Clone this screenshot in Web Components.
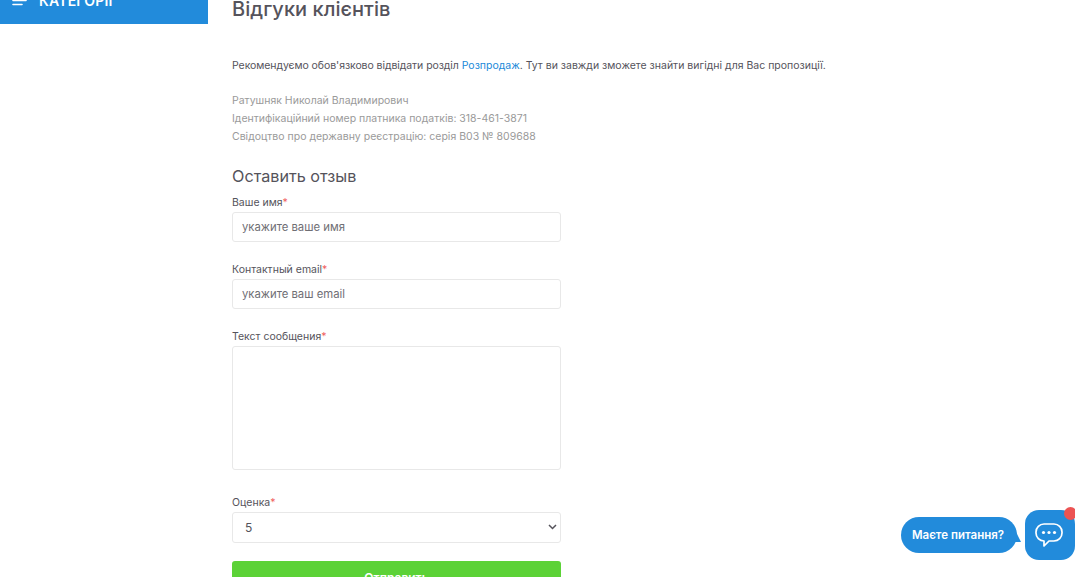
<!DOCTYPE html>
<html lang="uk">
<head>
<meta charset="utf-8">
<title>Відгуки клієнтів</title>
<style>
html, body { margin: 0; height: 577px; overflow: hidden; background: #fff; }
body { font-family: "Inter", "Liberation Sans", sans-serif; color: #55535b; }
</style>
</head>
<body>
<shop-page>
    <side-menu slot="side">КАТЕГОРІЇ</side-menu>
    <page-intro>Відгуки клієнтів</page-intro>
    <review-form></review-form>
</shop-page>
<chat-widget>Маєте питання?</chat-widget>

<script>
class ShopPage extends HTMLElement{
    constructor(){
        super();
        this.attachShadow({mode: "open"}).innerHTML = `
<style>
:host{
    display: grid;
    grid-template-columns: 208px 329px;
    column-gap: 24px;
    margin-top: -24px;
}
main{ display: flex; flex-direction: column; }
</style>
<aside><slot name="side"></slot></aside>
<main><slot></slot></main>`;
    }
}

class SideMenu extends HTMLElement{
    constructor(){
        super();
        this.attachShadow({mode: "open"}).innerHTML = `
<style>
:host{
    display: flex;
    align-items: center;
    gap: 12px;
    height: 48px;
    padding-left: 12px;
    box-sizing: border-box;
    background: #228bdb;
    color: #fff;
    font-size: 14px;
    font-weight: 600;
    letter-spacing: .2px;
}
svg{ display: block; }
</style>
<svg width="15" height="12" viewBox="0 0 15 12" fill="none" stroke="#fff" stroke-width="1.6" stroke-linecap="round">
    <path d="M1 2.5h13M1 6.500h13M1 10.500h9"/>
</svg>
<slot></slot>`;
    }
}

class PageIntro extends HTMLElement{
    constructor(){
        super();
        this.attachShadow({mode: "open"}).innerHTML = `
<style>
:host{ display: block; width: 700px; }
h1{
    margin: 0;
    padding-top: 20px;
    font-size: 20px;
    line-height: 26px;
    font-weight: 500;
    letter-spacing: .05px;
    color: #55535b;
}
p{ margin: 0; font-size: 10.5px; line-height: 18px; }
.promo{ margin-top: 35px; white-space: nowrap; }
.promo span{ letter-spacing: -.07px; }
.promo a{ color: #2089d9; text-decoration: none; }
.owner{ margin-top: 17px; color: #9a9a9a; }
</style>
<h1><slot></slot></h1>
<p class="promo"><span>Рекомендуємо обов'язково відвідати розділ </span><a href="#">Розпродаж</a>. Тут ви завжди зможете знайти вигідні для Вас пропозиції.</p>
<p class="owner">Ратушняк Николай Владимирович<br>Ідентифікаційний номер платника податків: 318-461-3871<br>Свідоцтво про державну реєстрацію: серія В03 № 809688</p>`;
    }
}

class FormField extends HTMLElement{
    constructor(){
        super();
        this.attachShadow({mode: "open"}).innerHTML = `
<style>
:host{ display: block; margin-bottom: 17px; }
label{ display: block; height: 20px; font-size: 10.5px; line-height: 21px; color: #55535b; }
label span{ color: #f06060; }
.box{ position: relative; }
input, textarea, select{
    display: block;
    width: 100%;
    box-sizing: border-box;
    height: 30px;
    padding: 0 9px;
    border: 1px solid #e8e8e8;
    border-radius: 3px;
    background: #fff;
    font: 11.3px "Inter", "Liberation Sans", sans-serif;
    color: #55535b;
    outline: none;
    resize: none;
}
::placeholder{ color: #6f6e74; opacity: 1; }
textarea{ height: 124px; }
select{ height: 31px; padding-left: 12px; appearance: none; font-size: 12px; }
svg{ position: absolute; right: 4px; top: 12px; display: block; }
</style>
<label><span class="name"></span><span>*</span></label>
<div class="box"></div>`;
    }

    connectedCallback(){
        const shadow = this.shadowRoot;
        const name = shadow.querySelector(".name");
        name.textContent = this.getAttribute("label");
        name.style.color = "#55535b";
        const type = this.getAttribute("type");
        const box = shadow.querySelector(".box");
        let control;
        if(type === "textarea"){
            control = document.createElement("textarea");
        }else if(type === "select"){
            control = document.createElement("select");
            control.innerHTML = "<option>5</option><option>4</option><option>3</option><option>2</option><option>1</option>";
        }else{
            control = document.createElement("input");
        }
        if(this.hasAttribute("placeholder")) control.placeholder = this.getAttribute("placeholder");
        box.appendChild(control);
        if(type === "select"){
            box.insertAdjacentHTML("beforeend", `<svg width="9" height="6" viewBox="0 0 9 6" fill="none" stroke="#55535b" stroke-width="1.5"><path d="M1 1l3.500 3.500L8 1"/></svg>`);
        }
    }
}

class ReviewForm extends HTMLElement{
    constructor(){
        super();
        this.attachShadow({mode: "open"}).innerHTML = `
<style>
:host{ display: block; margin-top: 20px; }
h2{ margin: 0 0 6px; font-size: 16.2px; line-height: 20px; font-weight: 400; color: #55535b; }
button{
    display: block;
    width: 100%;
    height: 33px;
    margin-top: 18px;
    border: none;
    border-radius: 3px;
    background: #5cd237;
    color: #fff;
    font: 600 12px "Inter", "Liberation Sans", sans-serif;
}
.area{ margin-bottom: 22px; }
</style>
<h2>Оставить отзыв</h2>
<form-field label="Ваше имя" placeholder="укажите ваше имя"></form-field>
<form-field label="Контактный email" placeholder="укажите ваш email"></form-field>
<form-field class="area" label="Текст сообщения" type="textarea"></form-field>
<form-field label="Оценка" type="select"></form-field>
<button type="button">Отправить</button>`;
    }
}

class ChatWidget extends HTMLElement{
    constructor(){
        super();
        this.attachShadow({mode: "open"}).innerHTML = `
<style>
:host{
    position: fixed;
    right: 0;
    top: 510px;
    display: flex;
    align-items: center;
    gap: 8px;
}
.bubble{
    position: relative;
    width: 116px;
    height: 36px;
    padding-right: 2px;
    box-sizing: border-box;
    display: flex;
    align-items: center;
    justify-content: center;
    border-radius: 18px;
    background: #228bdb;
    color: #fff;
    font-size: 11.5px;
    font-weight: 600;
}
.bubble::after{
    content: "";
    position: absolute;
    left: 108px;
    top: 8px;
    width: 12px;
    height: 17px;
    background: #228bdb;
    clip-path: polygon(30% 0, 100% 100%, 0 100%);
}
.btn{
    position: relative;
    width: 50px;
    height: 50px;
    border-radius: 14px;
    background: #228bdb;
    display: flex;
    align-items: center;
    justify-content: center;
}
.btn svg{ margin-right: 2px; }
.dot{
    position: absolute;
    top: -3px;
    left: 39px;
    width: 13px;
    height: 13px;
    border-radius: 50%;
    background: #ec5353;
}
</style>
<div class="bubble"><slot></slot></div>
<div class="btn">
    <svg width="28" height="24" viewBox="0 0 28 24" fill="none">
        <path d="M9 1h10a8 8 0 0 1 8 8v1a8 8 0 0 1-8 8h-5l-5 5v-5a8 8 0 0 1-8-8V9a8 8 0 0 1 8-8z" stroke="#fff" stroke-width="1.7" stroke-linejoin="round"/>
        <circle cx="8.500" cy="9.500" r="1.600" fill="#fff"/><circle cx="14" cy="9.500" r="1.600" fill="#fff"/><circle cx="19.500" cy="9.500" r="1.600" fill="#fff"/>
    </svg>
    <span class="dot"></span>
</div>`;
    }
}

customElements.define("shop-page", ShopPage);
customElements.define("side-menu", SideMenu);
customElements.define("page-intro", PageIntro);
customElements.define("form-field", FormField);
customElements.define("review-form", ReviewForm);
customElements.define("chat-widget", ChatWidget);
</script>
</body>
</html>
